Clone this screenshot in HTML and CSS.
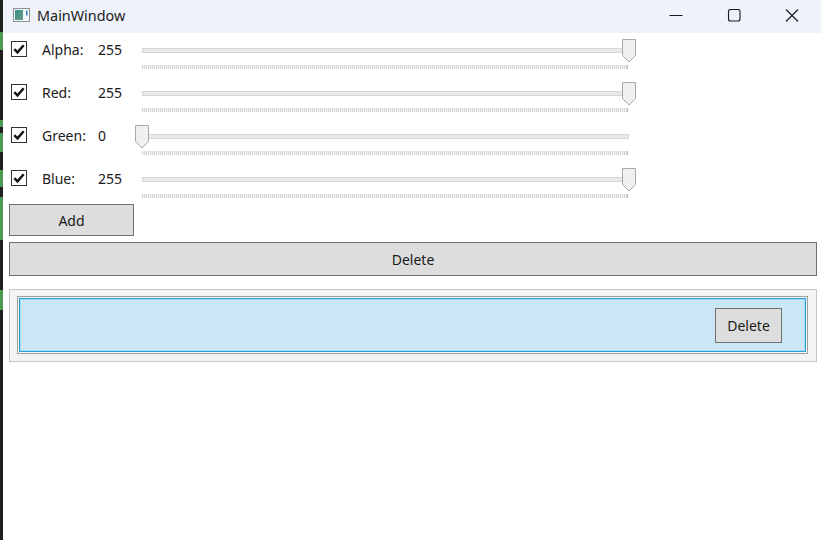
FILE: index.html
```html
<!DOCTYPE html>
<html>
<head>
<meta charset="utf-8">
<title>MainWindow</title>
<link rel="stylesheet" href="styles.css">
</head>
<body>
<div class="desk">
  <div class="seg dark" style="height:32px"></div>
  <div class="seg green" style="height:18px"></div>
  <div class="seg dark" style="height:70px"></div>
  <div class="seg green" style="height:7px"></div>
  <div class="seg dark" style="height:6px"></div>
  <div class="seg green" style="height:19px"></div>
  <div class="seg dark" style="height:18px"></div>
  <div class="seg green" style="height:17px"></div>
  <div class="seg dark" style="height:10px"></div>
  <div class="seg green" style="height:43px"></div>
  <div class="seg dark" style="height:50px"></div>
  <div class="seg green" style="height:20px"></div>
  <div class="seg dark grow"></div>
</div>
<div class="window">
  <header class="titlebar">
    <svg class="app-icon" width="17" height="14" viewBox="0 0 17 14">
      <defs>
        <linearGradient id="g" x1="0" y1="0" x2="1" y2="1">
          <stop offset="0" stop-color="#2f8f8a"/>
          <stop offset="1" stop-color="#6f9a8a"/>
        </linearGradient>
      </defs>
      <rect x="0.5" y="0.5" width="16" height="13" fill="#f4f6f8" stroke="#8c9196"/>
      <rect x="2" y="2" width="8" height="10" fill="url(#g)"/>
      <rect x="13" y="2.5" width="1.5" height="5" fill="#3b7fd0"/>
    </svg>
    <span class="title">MainWindow</span>
    <div class="caption">
      <div class="cap-btn">
        <svg width="14" height="14" viewBox="0 0 14 14"><path d="M0.5 6.5 H13.5" stroke="#1a1a1a" stroke-width="1"/></svg>
      </div>
      <div class="cap-btn">
        <svg width="14" height="14" viewBox="0 0 14 14"><rect x="1.5" y="0.5" width="11.5" height="11.5" rx="2" fill="none" stroke="#1a1a1a" stroke-width="1.1"/></svg>
      </div>
      <div class="cap-btn">
        <svg width="14" height="14" viewBox="0 0 14 14"><path d="M1 0.5 L13 12.5 M13 0.5 L1 12.5" stroke="#1a1a1a" stroke-width="1.1"/></svg>
      </div>
    </div>
  </header>
  <main class="content">
    <div class="rows">
      <div class="row">
        <span class="check"><svg width="16" height="16" viewBox="0 0 16 16"><path d="M3.3 8.2 L6.5 11.4 L12.7 4.3" fill="none" stroke="#111" stroke-width="2.4"/></svg></span>
        <span class="label">Alpha:</span>
        <span class="value">255</span>
        <div class="slider">
          <div class="track"></div>
          <div class="ticks"></div>
          <svg class="thumb" style="left:487px" width="14" height="24" viewBox="0 0 14 24"><path d="M0.5 0.5 H13.5 V16.5 L7 23 L0.5 16.5 Z" fill="#f0f0f0" stroke="#a9a9a9"/></svg>
        </div>
      </div>
      <div class="row">
        <span class="check"><svg width="16" height="16" viewBox="0 0 16 16"><path d="M3.3 8.2 L6.5 11.4 L12.7 4.3" fill="none" stroke="#111" stroke-width="2.4"/></svg></span>
        <span class="label">Red:</span>
        <span class="value">255</span>
        <div class="slider">
          <div class="track"></div>
          <div class="ticks"></div>
          <svg class="thumb" style="left:487px" width="14" height="24" viewBox="0 0 14 24"><path d="M0.5 0.5 H13.5 V16.5 L7 23 L0.5 16.5 Z" fill="#f0f0f0" stroke="#a9a9a9"/></svg>
        </div>
      </div>
      <div class="row">
        <span class="check"><svg width="16" height="16" viewBox="0 0 16 16"><path d="M3.3 8.2 L6.5 11.4 L12.7 4.3" fill="none" stroke="#111" stroke-width="2.4"/></svg></span>
        <span class="label">Green:</span>
        <span class="value">0</span>
        <div class="slider">
          <div class="track"></div>
          <div class="ticks"></div>
          <svg class="thumb" style="left:0px" width="14" height="24" viewBox="0 0 14 24"><path d="M0.5 0.5 H13.5 V16.5 L7 23 L0.5 16.5 Z" fill="#f0f0f0" stroke="#a9a9a9"/></svg>
        </div>
      </div>
      <div class="row">
        <span class="check"><svg width="16" height="16" viewBox="0 0 16 16"><path d="M3.3 8.2 L6.5 11.4 L12.7 4.3" fill="none" stroke="#111" stroke-width="2.4"/></svg></span>
        <span class="label">Blue:</span>
        <span class="value">255</span>
        <div class="slider">
          <div class="track"></div>
          <div class="ticks"></div>
          <svg class="thumb" style="left:487px" width="14" height="24" viewBox="0 0 14 24"><path d="M0.5 0.5 H13.5 V16.5 L7 23 L0.5 16.5 Z" fill="#f0f0f0" stroke="#a9a9a9"/></svg>
        </div>
      </div>
    </div>
    <button class="btn btn-add">Add</button>
    <button class="btn btn-wide">Delete</button>
    <div class="listbox">
      <div class="item">
        <div class="item-sel">
          <button class="btn btn-item">Delete</button>
        </div>
      </div>
    </div>
  </main>
</div>
</body>
</html>
```

FILE: styles.css
```css
* { box-sizing: border-box; }

html, body {
  margin: 0;
  padding: 0;
}

body {
  width: 821px;
  height: 540px;
  overflow: hidden;
  display: flex;
  background: #ffffff;
  font-family: "Noto Sans", "Open Sans", sans-serif;
  font-size: 14px;
  color: #000;
}

.desk {
  width: 3px;
  height: 540px;
  display: flex;
  flex-direction: column;
  flex: none;
}

.seg { flex: none; }
.seg.dark { background: #1f1f1f; }
.seg.green { background: #4c9a52; }
.seg.grow { flex: 1; }

.window {
  flex: 1;
  display: flex;
  flex-direction: column;
  background: #ffffff;
}

.titlebar {
  height: 33px;
  flex: none;
  display: flex;
  align-items: flex-start;
  background: #eff2fa;
}

.app-icon {
  margin: 8px 0 0 10px;
  flex: none;
}

.title {
  margin-left: 7px;
  margin-top: 6px;
  font-size: 14.4px;
  line-height: 20px;
  color: #1b1b1b;
}

.caption {
  margin-left: auto;
  display: flex;
}

.cap-btn {
  width: 58px;
  height: 33px;
  display: flex;
  justify-content: center;
  padding-top: 9px;
}

.content {
  padding: 0 4px 0 6px;
  display: flex;
  flex-direction: column;
  align-items: flex-start;
}

.rows {
  height: 171px;
  display: flex;
  flex-direction: column;
}

.row {
  height: 43px;
  flex: none;
  display: flex;
  align-items: flex-start;
}

.check {
  width: 16px;
  height: 16px;
  margin: 8px 0 0 2px;
  border: 1px solid #333333;
  background: #ffffff;
  display: flex;
  flex: none;
}

.check svg {
  margin: -1px;
}

.label {
  margin: 7px 0 0 15px;
  width: 56px;
  line-height: 20px;
  color: #1a1a1a;
}

.value {
  margin-top: 7px;
  width: 37px;
  line-height: 20px;
  color: #1a1a1a;
}

.slider {
  position: relative;
  width: 501px;
  height: 40px;
  flex: none;
}

.track {
  margin: 15px 7px 0 7px;
  height: 5px;
  background: #e7eaea;
  border: 1px solid #d6d6d6;
}

.ticks {
  margin: 12px 8px 0 7px;
  height: 4px;
  background: repeating-linear-gradient(to right, #d6d6d6 0 1px, #f2f2f2 1px 2px);
  border-right: 1px solid #bdbdbd;
}

.thumb {
  position: absolute;
  top: 6px;
}

.btn {
  font-family: "Noto Sans", "Open Sans", sans-serif;
  font-size: 14px;
  color: #1a1a1a;
  background: #dddddd;
  border: 1px solid #707070;
  border-radius: 0;
  padding: 0;
  margin: 0;
  line-height: 20px;
}

.btn-add {
  width: 125px;
  height: 32px;
  padding-top: 1px;
}

.btn-wide {
  width: 808px;
  height: 34px;
  margin-top: 6px;
  padding-top: 1px;
}

.listbox {
  width: 808px;
  height: 73px;
  margin-top: 13px;
  background: #f3f3f3;
  border: 1px solid #c6c6c6;
  padding: 6px 8px 6px 7px;
}

.item {
  height: 58px;
  border: 1px solid #a0a0a0;
  padding: 1px;
  background: #f7f7f7;
}

.item-sel {
  height: 54px;
  border: 1px solid #26a0da;
  box-shadow: inset 0 0 0 1px #a9d8f2;
  background: #cbe6f5;
  display: flex;
  justify-content: flex-end;
  align-items: flex-start;
  padding: 9px 23px 0 0;
}

.btn-item {
  width: 67px;
  height: 35px;
}
```
